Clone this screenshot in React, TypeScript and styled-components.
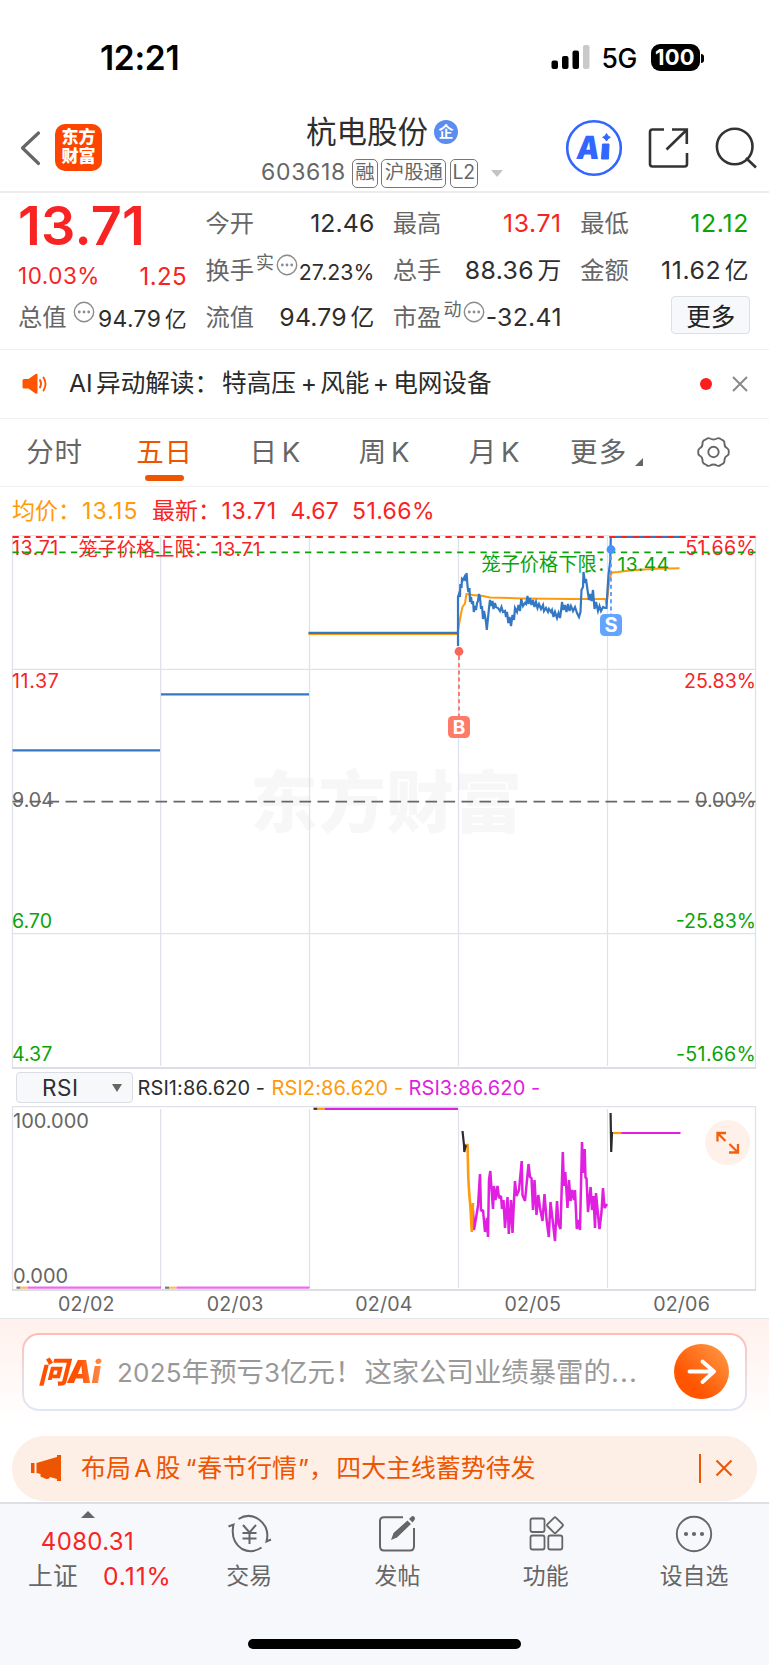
import React from 'react';
import styled, { createGlobalStyle } from 'styled-components';

const RED = '#f82424';
const GREEN = '#0aa30a';
const ORANGE = '#ff9a0a';
const BRAND = '#ee5500';
const INK = '#2e2e2e';
const GREY = '#666';
const GRID = '#dfe2ea';
const BLUE = '#3478c4';
const MAGENTA = '#e01fe0';
const FONT = `Inter, 'Noto Sans CJK SC', sans-serif`;

const GlobalStyle = createGlobalStyle`
  * { box-sizing: border-box; }
  html, body { margin: 0; padding: 0; background: #fff; }
  body { font-family: ${FONT}; color: ${INK}; width: 769px; }
`;

const Screen = styled.main`
  width: 769px;
  height: 1665px;
  display: flex;
  flex-direction: column;
  background: #fff;
  overflow: hidden;
  white-space: nowrap;
  line-height: 1.2;
`;

/* ---------- status bar ---------- */
const StatusBar = styled.div`
  height: 108px;
  padding: 8px 65px 0 100px;
  display: flex;
  align-items: center;
`;
const Clock = styled.span`
  font-size: 33.5px;
  font-weight: 600;
  color: #000;
  letter-spacing: -0.3px;
  flex: 1;
`;
const SignalBars = styled.svg`
  position: relative;
  top: -1px;
`;
const Network = styled.span`
  font-size: 26.5px;
  font-weight: 500;
  color: #000;
  width: 38px;
  margin-left: 11.5px;
  letter-spacing: -0.3px;
  position: relative;
  top: 0.5px;
`;
const Battery = styled.span`
  width: 49px;
  height: 27px;
  margin-left: 11px;
  border-radius: 9px;
  background: #000;
  color: #fff;
  font-size: 22px;
  font-weight: 700;
  letter-spacing: 0.2px;
  display: flex;
  align-items: center;
  justify-content: center;
  position: relative;
  top: -1px;
`;
const BatteryTip = styled.span`
  width: 3px;
  height: 9px;
  margin-left: 1.5px;
  border-radius: 0 4px 4px 0;
  background: #000;
`;

/* ---------- title bar ---------- */
const TitleBar = styled.header`
  height: 85px;
  display: flex;
  align-items: flex-start;
  border-bottom: 2px solid #ececec;
`;
const BackIcon = styled.svg`
  margin: 22px 0 0 19px;
`;
const Logo = styled.div`
  width: 47px;
  height: 47px;
  margin: 16px 0 0 14px;
  border-radius: 10px;
  background: #ff4400;
  color: #fff;
  font-size: 17px;
  font-weight: 900;
  line-height: 19.5px;
  text-align: center;
  padding-top: 3.5px;
`;
const Identity = styled.div`
  margin-left: 159px;
  width: 300px;
`;
const NameRow = styled.div`
  height: 38px;
  margin-top: 5px;
  padding-left: 45px;
  display: flex;
  align-items: center;
`;
const StockName = styled.span`
  font-size: 30.5px;
  width: 127px;
`;
const Badge = styled.span`
  width: 24px;
  height: 24px;
  border-radius: 50%;
  background: #5b8cf0;
  color: #fff;
  font-size: 15px;
  font-weight: 700;
  display: flex;
  align-items: center;
  justify-content: center;
  margin-left: 1px;
`;
const CodeRow = styled.div`
  display: flex;
  align-items: center;
  height: 29px;
  margin-top: 7.5px;
`;
const Code = styled.span`
  font-size: 23px;
  color: ${GREY};
  width: 91px;
  letter-spacing: 0.7px;
`;
const Tag = styled.span<{ $w: number }>`
  width: ${p => p.$w}px;
  height: 29px;
  margin-right: 3.4px;
  border: 1.4px solid #777;
  border-radius: 5px;
  color: ${GREY};
  font-size: 19.4px;
  display: flex;
  align-items: center;
  justify-content: center;
`;
const Caret = styled.span`
  border: 6.5px solid transparent;
  border-top: 7.5px solid #c4c4c4;
  border-bottom: 0;
  margin-left: 9.5px;
`;
const Actions = styled.svg`
  margin: 8px 0 0 4px;
  font-family: ${FONT};
`;

/* ---------- quote grid ---------- */
const Quote = styled.section`
  height: 157px;
  padding: 7px 20px 0 18px;
  display: grid;
  grid-template-columns: repeat(4, 169px);
  grid-template-rows: 47px 47px 47px;
  column-gap: 18.4px;
  border-bottom: 1.5px solid #efefef;
`;
const Cell = styled.div`
  display: flex;
  align-items: center;
`;
const BigPrice = styled.span`
  color: ${RED};
  font-size: 54px;
  font-weight: 600;
  letter-spacing: 0.2px;
  position: relative;
  top: 3px;
`;
const Label = styled.span`
  color: ${GREY};
  font-size: 24.3px;
`;
const Value = styled.span<{ $c?: string; $s?: number; $dy?: number; $ls?: number }>`
  color: ${p => p.$c || INK};
  font-size: ${p => p.$s || 24.8}px;
  letter-spacing: ${p => p.$ls ?? 0.4}px;
  margin-left: auto;
  position: relative;
  top: ${p => p.$dy || 0}px;
`;
const Unit = styled.span`
  font-size: 0.96em;
  margin-left: 3.5px;
`;
const Sup = styled.span`
  color: ${GREY};
  font-size: 18px;
  margin-left: 2px;
  position: relative;
  top: -8px;
`;
const Change = styled.span`
  color: ${RED};
  font-size: 22.5px;
  letter-spacing: 0.5px;
  position: relative;
  top: 5px;
`;
const InfoSvg = styled.svg<{ $ml: number }>`
  margin-left: ${p => p.$ml}px;
  position: relative;
  top: -5.5px;
  flex: none;
`;
const MoreButton = styled.button`
  width: 79px;
  height: 38px;
  margin: 0 -1px 0 auto;
  padding: 0;
  border: 1.5px solid #dcdfe6;
  border-radius: 4px;
  background: #f7f8fb;
  color: #222;
  font: 24.5px ${FONT};
  position: relative;
  top: -2.5px;
`;
const InfoIcon = ({ ml }: { ml: number }) => (
  <InfoSvg $ml={ml} width="22" height="22" viewBox="0 0 22 22">
    <circle cx="11" cy="11" r="9.7" fill="none" stroke="#8c8c8c" strokeWidth="1.4" />
    {[6.3, 11, 15.7].map(x => <circle key={x} cx={x} cy="11" r="1.4" fill="#8c8c8c" />)}
  </InfoSvg>
);

/* ---------- AI notice ---------- */
const Notice = styled.section`
  height: 68.5px;
  padding: 0 21.5px 0 21px;
  display: flex;
  align-items: center;
  border-bottom: 1.5px solid #f1f1f1;
`;
const NoticeText = styled.span`
  font-size: 24.6px;
  color: #2a2a2a;
  margin-left: 19px;
  flex: 1;
`;
const Gap = styled.span<{ $w: number }>`
  display: inline-block;
  width: ${p => p.$w}px;
`;
const Dot = styled.span`
  width: 12px;
  height: 12px;
  border-radius: 50%;
  background: #fa1e1e;
  margin-right: 20px;
`;

/* ---------- tabs ---------- */
const Tabs = styled.nav`
  height: 68.5px;
  display: flex;
  border-bottom: 1.5px solid #f0f0f0;
`;
const Tab = styled.div<{ $w: number; $active?: boolean }>`
  width: ${p => p.$w}px;
  padding-top: 17.5px;
  display: flex;
  flex-direction: column;
  align-items: center;
  font-size: 27.5px;
  line-height: 33px;
  letter-spacing: 0.7px;
  word-spacing: -4.5px;
  color: ${p => (p.$active ? BRAND : GREY)};
  &::after {
    content: '';
    width: 39px;
    height: 6px;
    margin-top: 6px;
    border-radius: 3px;
    background: ${p => (p.$active ? BRAND : 'transparent')};
  }
`;
const MoreTab = styled.div`
  display: flex;
  width: 118px;
  padding: 17.5px 0 0 19.5px;
  font-size: 27.5px;
  letter-spacing: 1.3px;
  line-height: 33px;
  color: ${GREY};
`;
const Corner = styled.span`
  margin: 22px 0 0 7px;
  height: 0;
  border-left: 8px solid transparent;
  border-bottom: 8px solid ${GREY};
`;

/* ---------- chart ---------- */
const Summary = styled.div`
  height: 48px;
  padding: 2.5px 0 0 12px;
  display: flex;
  align-items: center;
  font-size: 23px;
  color: ${RED};
`;
const SummaryItem = styled.span<{ $w: number; $c?: string; $ls?: number }>`
  width: ${p => p.$w}px;
  color: ${p => p.$c || RED};
  letter-spacing: ${p => p.$ls || 0}px;
`;
const ChartSvg = styled.svg`
  display: block;
  flex: none;
  font-family: ${FONT};
`;
const IndicatorRow = styled.div`
  height: 37px;
  padding-left: 16px;
  display: flex;
  align-items: center;
  font-size: 20px;
`;
const IndicatorSelect = styled.div`
  width: 117px;
  height: 31px;
  border: 1.5px solid #dadde4;
  border-radius: 4px;
  background: #f7f8fa;
  display: flex;
  align-items: center;
  padding: 0 10px 0 25px;
  justify-content: space-between;
  font-size: 22.5px;
  letter-spacing: 0.6px;
  margin-right: 4.5px;
`;
const SelectArrow = styled.span`
  border: 5px solid transparent;
  border-top: 8px solid ${GREY};
  border-bottom: 0;
`;
const Reading = styled.span<{ $c: string; $w: number; $ls?: number }>`
  color: ${p => p.$c};
  width: ${p => p.$w}px;
  letter-spacing: ${p => p.$ls ?? 0.1}px;
`;
const Dates = styled.div`
  height: 27px;
  padding: 1px 13px 0 12px;
  display: grid;
  grid-template-columns: repeat(5, 1fr);
  align-items: center;
  text-align: center;
  font-size: 19.6px;
  color: ${GREY};
  letter-spacing: 0.2px;
`;

/* ---------- ask AI ---------- */
const AskArea = styled.section`
  height: 184px;
  border-top: 1.5px solid #e4e6ec;
  background: linear-gradient(#fff1ec, #ffffff 106px);
  padding: 13.5px 12px 0;
`;
const AskFrame = styled.div`
  height: 78px;
  margin: 0 10px;
  border-radius: 17px;
  padding: 2px;
  background: linear-gradient(#ffbcb3, #f1d6de 50%, #dde8f6);
`;
const AskBox = styled.div`
  height: 100%;
  border-radius: 15px;
  background: #fff;
  display: flex;
  align-items: center;
  padding: 0 16px 0 14px;
`;
const AskBrand = styled.span`
  width: 79px;
  display: flex;
  align-items: center;
  font-size: 31px;
  font-weight: 900;
  font-style: italic;
  letter-spacing: -0.5px;
  background: linear-gradient(90deg, #ff5000 50%, #ff8a4a 80%);
  -webkit-background-clip: text;
  background-clip: text;
  color: transparent;
`;
const BrandHan = styled.span`
  font-size: 30px;
`;
const Prompt = styled.span`
  color: #999;
  font-size: 27.4px;
  flex: 1;
  position: relative;
  top: 1px;
`;
const PromptDigits = styled.span`
  font-size: 26px;
  letter-spacing: 0.2px;
`;
const Ellipsis = styled.span`
  letter-spacing: 1.1px;
`;
const SendButton = styled.svg`
  flex: none;
`;
const Banner = styled.div`
  height: 65px;
  margin-top: 25px;
  border-radius: 33px;
  background: #fdeee6;
  color: ${BRAND};
  display: flex;
  align-items: center;
  padding: 0 24.5px 0 18px;
  font-size: 24.9px;
`;
const BannerText = styled.span`
  flex: 1;
  margin-left: 19px;
  padding-top: 2px;
`;
const Divider = styled.span`
  width: 1.5px;
  height: 29px;
  background: ${BRAND};
  margin-right: 14px;
`;

/* ---------- bottom bar ---------- */
const BottomBar = styled.footer`
  flex: 1;
  border-top: 2px solid #dddfe4;
  background: #f7f8fb;
  display: flex;
  flex-direction: column;
  align-items: center;
`;
const NavRow = styled.div`
  height: 135px;
  width: 100%;
  display: flex;
`;
const IndexPanel = styled.div`
  width: 175px;
  display: flex;
  flex-direction: column;
  align-items: center;
  padding-top: 7px;
  color: ${RED};
`;
const UpMark = styled.span`
  border: 7px solid transparent;
  border-bottom: 7px solid ${GREY};
  border-top: 0;
`;
const IndexValue = styled.span`
  font-size: 24px;
  line-height: 30px;
  margin-top: 9px;
  letter-spacing: 0.35px;
`;
const IndexLine = styled.div`
  display: flex;
  width: 100%;
  padding-left: 28px;
  font-size: 24.7px;
  line-height: 30px;
  letter-spacing: 0.9px;
  margin-top: 3.5px;
`;
const IndexName = styled.span`
  color: ${GREY};
  letter-spacing: 0.3px;
  width: 75px;
`;
const NavItem = styled.div`
  width: 148.3px;
  display: flex;
  flex-direction: column;
  align-items: center;
  padding-top: 7px;
  font-size: 22.9px;
  line-height: 30px;
  color: ${GREY};
  svg { display: block; margin-bottom: 5.5px; }
`;
const HomeIndicator = styled.div`
  width: 273px;
  height: 10px;
  border-radius: 5px;
  background: #000;
`;

/* ---------- chart data ---------- */
const days = [160.7, 309.5, 458.5, 607.5];

const pricePath = [
  [458, 646], [458, 597], [459, 594], [460, 597], [460.3, 584], [461.5, 588], [462, 579], [463, 580], [464.5, 577],
  [465.5, 581], [466.6, 573], [467.5, 586], [468.3, 592], [469.5, 588], [470, 602], [471, 597], [472, 604],
  [473, 601], [473.8, 612], [475, 606], [476, 610], [477, 603], [478, 601], [479, 594], [480, 597], [481, 609],
  [482, 606], [483, 619], [484, 611], [485, 616], [486, 622], [486.8, 630], [488, 618], [489, 608], [490, 600],
  [491, 606], [492.5, 601], [493.5, 609], [495, 603], [496, 607], [498, 608], [500, 611], [501.5, 607], [503, 612],
  [505, 611], [506, 617], [507, 612], [508.3, 623], [509.5, 617], [511, 626], [512.5, 615], [514, 620], [515, 608],
  [517, 612], [518.5, 605], [520, 611], [521.2, 599], [523, 606], [525, 603], [526, 604], [527.5, 596], [528.5, 604],
  [530, 598], [531.5, 605], [533, 600], [534.5, 607], [536, 602], [537.5, 608], [539, 604], [541, 609], [543, 605],
  [544, 611], [546, 608], [548, 612], [549, 609], [551, 612], [552, 610], [553.5, 617], [555, 612], [557, 618],
  [558.5, 613], [560, 618], [561, 611], [562, 602], [563.5, 610], [565, 605], [566.5, 612], [568, 604], [569.5, 611],
  [571, 606], [573, 611], [575, 607], [577, 613], [579, 617], [580.5, 612], [581.5, 590], [583, 587], [583.5, 572],
  [585, 583], [586, 579], [587.5, 590], [589, 600], [590, 594], [591.5, 601], [593, 590], [594.5, 609], [596, 602],
  [598, 611], [599.5, 606], [601, 611], [603, 607], [605, 608], [606.5, 608], [607.5, 590], [608.5, 575],
  [609.5, 567], [610.2, 562], [610.8, 537],
];
const averagePath = [
  [308.5, 633.9], [457.5, 633.9], [459, 625], [460.7, 615], [462.5, 607], [465, 603.5], [466.4, 594], [473, 595], [483, 596],
  [490, 597.4], [523, 598.4], [573, 599], [605.5, 599], [606.5, 604], [608, 593], [609, 583], [611, 574], [612.3, 572.5],
  [618, 572], [626, 571], [640, 569.7], [656, 568.7], [679.5, 568.3],
];
const rsiMain = [
  [473, 1210], [474, 1230], [476, 1218], [478, 1206], [480, 1174], [481, 1211], [483, 1210], [485, 1232], [487, 1218],
  [488, 1237], [489, 1180], [490.3, 1171], [491.5, 1189], [493, 1209], [494, 1186], [495.5, 1200], [497.5, 1186],
  [499, 1198], [501, 1196], [502, 1209], [503.5, 1200], [505, 1228], [507.5, 1197], [508.8, 1234], [511, 1200],
  [512.5, 1233], [514, 1200], [515, 1181], [516.5, 1196], [519, 1190], [521.7, 1161], [522.5, 1195], [525, 1201],
  [527, 1180], [528.5, 1164], [530, 1177], [531.5, 1178], [533, 1210], [534.5, 1180], [536.5, 1215], [538.3, 1195],
  [540, 1208], [542.5, 1221], [544.5, 1194], [546.5, 1219], [548.8, 1237], [550.5, 1202], [552.5, 1219], [555, 1241],
  [557, 1201], [558.5, 1224], [560.5, 1229], [562.8, 1152], [564, 1186], [565.3, 1172], [567.5, 1208], [569, 1180],
  [570.5, 1201], [572, 1190], [574, 1200], [575, 1190], [576.8, 1229], [578, 1220], [580, 1230], [582, 1142],
  [583, 1173], [584.7, 1149], [585.5, 1178], [586.5, 1178], [588, 1212], [590.6, 1187], [592, 1210], [593.5, 1196],
  [595, 1228], [596, 1193], [598.5, 1220], [599.5, 1229], [601.5, 1212], [603, 1188], [604.5, 1208], [607, 1204],
];
const toPoints = (pts: number[][]) => pts.map(p => p.join(',')).join(' ');

const priceLabels = [
  { y: 554.5, price: '13.71', pct: '51.66%', color: RED, ls: 0.55 },
  { y: 687.5, price: '11.37', pct: '25.83%', color: RED, ls: 0.65 },
  { y: 807.3, price: '9.04', pct: '0.00%', color: GREY, ls: 0 },
  { y: 927.8, price: '6.70', pct: '-25.83%', color: GREEN, ls: 0 },
  { y: 1060.8, price: '4.37', pct: '-51.66%', color: GREEN, ls: 0 },
];

function PriceChart() {
  return (
    <ChartSvg width="769" height="534" viewBox="0 535 769 534">
      <text x="386" y="827" fontSize="67.5" fontWeight="900" fill="#f7f7f7" textAnchor="middle" textLength="272">东方财富</text>
      <g stroke={GRID} strokeWidth="1.3" fill="none">
        <path d="M12.5 1068V535.6H755.5V1068" />
        {days.map(x => <line key={x} x1={x} x2={x} y1="537" y2="1066" />)}
        <line x1="12.5" x2="755.5" y1="669.4" y2="669.4" />
        <line x1="12.5" x2="755.5" y1="933.6" y2="933.6" />
        <line x1="12" x2="756" y1="1068" y2="1068" stroke="#cfd3dc" />
      </g>
      {priceLabels.map(l => (
        <g key={l.y} fill={l.color} fontSize="19.6">
          <text x="12" y={l.y} letterSpacing={l.ls}>{l.price}</text>
          <text x="756" y={l.y} textAnchor="end" letterSpacing={l.pct.includes('51') ? 0.35 : 0}>{l.pct}</text>
        </g>
      ))}
      <line x1="12.5" x2="755.5" y1="801.7" y2="801.7" stroke={GREY} strokeWidth="1.8" strokeDasharray="11.6 6.4" strokeDashoffset="1" />
      <polyline points={toPoints(averagePath)} fill="none" stroke={ORANGE} strokeWidth="2" strokeLinejoin="round" />
      <g stroke={BLUE} strokeWidth="2.2" fill="none">
        <line x1="12.5" x2="160" y1="750.3" y2="750.3" />
        <line x1="161" x2="309" y1="694.4" y2="694.4" />
        <line x1="308.5" x2="457.5" y1="632.9" y2="632.9" />
        <polyline points={toPoints(pricePath)} />
        <line x1="610.5" x2="680" y1="537" y2="537" />
      </g>
      <line x1="12.5" x2="755.5" y1="537" y2="537" stroke={RED} strokeWidth="2" strokeDasharray="6.3 5.4" />
      <line x1="12.5" x2="755.5" y1="552.4" y2="552.4" stroke={GREEN} strokeWidth="1.9" strokeDasharray="6.3 5.4" />
      <g fontSize="19.2">
        <text x="78.5" y="556.3" fill={RED}>笼子价格上限：</text>
        <text x="215" y="556.3" fill={RED} letterSpacing="0.6">13.71</text>
        <text x="481.5" y="571.3" fill={GREEN}>笼子价格下限：</text>
        <text x="617.5" y="571.3" fill={GREEN} letterSpacing="0.5">13.44</text>
      </g>
      <line x1="459" x2="459" y1="656" y2="716" stroke="#ff7866" strokeWidth="1.9" strokeDasharray="4 3.2" />
      <circle cx="459" cy="651.5" r="4.4" fill="#f8675a" />
      <rect x="448" y="716" width="22" height="22" rx="4.5" fill="#ff7b69" />
      <text x="459" y="733.7" fontSize="19" fontWeight="700" fill="#fff" textAnchor="middle">B</text>
      <line x1="611" x2="611" y1="556" y2="614" stroke="#5c9eff" strokeWidth="1.9" strokeDasharray="4 3.2" />
      <circle cx="611" cy="549.5" r="4.4" fill="#4792ff" />
      <rect x="600" y="614" width="22" height="22" rx="4.5" fill="#63a4ff" />
      <text x="611" y="632" fontSize="20" fontWeight="700" fill="#fff" textAnchor="middle">S</text>
    </ChartSvg>
  );
}

function FlatRsi({ y, from, to, soft }: { y: number; from: number; to: number; soft?: boolean }) {
  return (
    <g strokeWidth="2.2" opacity={soft ? 0.65 : 1}>
      <line x1={from} x2={from + 4} y1={y} y2={y} stroke="#333" />
      <line x1={from + 4} x2={from + 11.5} y1={y} y2={y} stroke={ORANGE} />
      <line x1={from + 11.5} x2={to} y1={y} y2={y} stroke={MAGENTA} />
    </g>
  );
}

function RsiChart() {
  return (
    <ChartSvg width="769" height="185" viewBox="0 1106 769 185">
      <g stroke={GRID} strokeWidth="1.3" fill="none">
        <path d="M12.5 1290V1106.6H755.5V1290" />
        {days.map(x => <line key={x} x1={x} x2={x} y1="1109" y2="1288" />)}
        <line x1="12" x2="756" y1="1290" y2="1290" stroke="#cfd3dc" />
      </g>
      <g fontSize="20" fill={GREY}>
        <text x="13" y="1128.3">100.000</text>
        <text x="13" y="1282.5">0.000</text>
      </g>
      <FlatRsi y={1287.7} from={16.5} to={161} soft />
      <FlatRsi y={1287.7} from={165} to={309.5} soft />
      <FlatRsi y={1108.8} from={313.5} to={458} />
      <polyline points={toPoints(rsiMain)} fill="none" stroke={MAGENTA} strokeWidth="2.5" strokeLinejoin="bevel" />
      <polyline points="466,1148 467.5,1144 468.3,1178 469.3,1195 470.3,1205 471.8,1232 472.5,1212 473,1203" fill="none" stroke={ORANGE} strokeWidth="2.6" />
      <polyline points="462.5,1131 464,1145 464.3,1152 465.5,1146 466.5,1147" fill="none" stroke="#2b2b2b" strokeWidth="2.2" />
      <polyline points="610.6,1113 611.2,1152 612,1133 613.5,1133" fill="none" stroke="#2b2b2b" strokeWidth="2.2" />
      <line x1="613" x2="622" y1="1133" y2="1133" stroke={ORANGE} strokeWidth="2.2" />
      <line x1="621.5" x2="680.5" y1="1133" y2="1133" stroke={MAGENTA} strokeWidth="2.2" />
      <circle cx="727.7" cy="1142.6" r="22.5" fill="#fff0e9" />
      <path d="M717.500 1141.500V1133H726M717.500 1133L725.500 1141M738 1144V1152.500H729M738 1152.500L729.500 1144" fill="none" stroke="#f2600f" strokeWidth="2.300" />
    </ChartSvg>
  );
}

export default function App() {
  return (
    <Screen>
      <GlobalStyle />
      <StatusBar>
        <Clock>12:21</Clock>
        <SignalBars width="39" height="26" viewBox="0 0 39 26">
          <rect x="0.5" y="16.500" width="6.500" height="8.500" rx="2" />
          <rect x="11" y="12" width="6.500" height="13" rx="2" />
          <rect x="21.500" y="6.500" width="6.500" height="18.500" rx="2" />
          <rect x="32" y="1" width="6.500" height="24" rx="2" fill="#c9c9c9" />
        </SignalBars>
        <Network>5G</Network>
        <Battery>100</Battery>
        <BatteryTip />
      </StatusBar>

      <TitleBar>
        <BackIcon width="22" height="36" viewBox="0 0 22 36">
          <path d="M19.500 3L3.500 18L19.500 33.500" fill="none" stroke="#666" strokeWidth="3.200" strokeLinecap="round" strokeLinejoin="round" />
        </BackIcon>
        <Logo>东方<br />财富</Logo>
        <Identity>
          <NameRow>
            <StockName>杭电股份</StockName>
            <Badge>企</Badge>
          </NameRow>
          <CodeRow>
            <Code>603618</Code>
            <Tag $w={26}>融</Tag>
            <Tag $w={65}>沪股通</Tag>
            <Tag $w={28}>L2</Tag>
            <Caret />
          </CodeRow>
        </Identity>
        <Actions width="204" height="66" viewBox="565 116 204 66">
          <circle cx="594" cy="148" r="26.800" fill="none" stroke="#3366ff" strokeWidth="2.600" />
          <text transform="translate(575.500 158.800) skewX(-7)" fontSize="32" fontWeight="900" fill="#3366ff" textLength="23" lengthAdjust="spacingAndGlyphs">A</text>
          <path d="M602.500 144h6.500l-0.500 15h-7z" fill="#3366ff" stroke="#3366ff" strokeLinejoin="round" />
          <path d="M606.500 133.500q1 3 3.800 3.800q-2.800 1-3.800 3.800q-1-2.800-3.800-3.800q2.800-0.800 3.800-3.800z" fill="#3366ff" stroke="#3366ff" />
          <g fill="none" stroke="#333" strokeWidth="2.600">
            <path d="M664 129.500H652.500Q650 129.500 650 132V164Q650 166.500 652.500 166.500H684.500Q687 166.500 687 164V153" />
            <path d="M672 129.500H686.800V144M686.500 130L666.500 149.500" />
            <circle cx="734.700" cy="146.500" r="17.800" />
            <path d="M746 158L756 167.500" />
          </g>
        </Actions>
      </TitleBar>

      <Quote>
        <Cell><BigPrice>13.71</BigPrice></Cell>
        <Cell><Label>今开</Label><Value $ls={0.1}>12.46</Value></Cell>
        <Cell><Label>最高</Label><Value $c={RED} $ls={0.6}>13.71</Value></Cell>
        <Cell><Label>最低</Label><Value $c={GREEN} $ls={0.7}>12.12</Value></Cell>

        <Cell><Change>10.03%</Change><Value $c={RED} $s={24} $dy={7}>1.25</Value></Cell>
        <Cell><Label>换手</Label><Sup>实</Sup><InfoIcon ml={2} /><Value $s={21.3} $dy={2.5} $ls={0}>27.23%</Value></Cell>
        <Cell><Label>总手</Label><Value>88.36<Unit>万</Unit></Value></Cell>
        <Cell><Label>金额</Label><Value $ls={0.6}>11.62<Unit>亿</Unit></Value></Cell>

        <Cell><Label>总值</Label><InfoIcon ml={6} /><Value $s={22.8} $dy={1}>94.79<Unit>亿</Unit></Value></Cell>
        <Cell><Label>流值</Label><Value $ls={0.2}>94.79<Unit>亿</Unit></Value></Cell>
        <Cell><Label>市盈</Label><Sup>动</Sup><InfoIcon ml={2} /><Value $ls={0.3}>-32.41</Value></Cell>
        <Cell><MoreButton>更多</MoreButton></Cell>
      </Quote>

      <Notice>
        <svg width="29" height="24" viewBox="0 0 29 24">
          <path d="M1.500 8.500Q1.500 7 3 7H7.500L14.500 2Q16.500 1 16.500 3V20.500Q16.500 22.500 14.500 21.500L7.500 16.500H3Q1.500 16.500 1.500 15Z" fill="#ff5500" />
          <path d="M19 8Q21 11.800 19 15.500M22.500 5.500Q26.500 11.800 22.500 18.500" fill="none" stroke="#ff5500" strokeWidth="1.900" strokeLinecap="round" />
        </svg>
        <NoticeText>AI<Gap $w={3.5} />异动解读：<Gap $w={3} />特高压<Gap $w={5} />+<Gap $w={3} />风能<Gap $w={3.5} />+<Gap $w={4} />电网设备</NoticeText>
        <Dot />
        <svg width="16" height="16" viewBox="0 0 16 16"><path d="M1 1L15 15M15 1L1 15" stroke="#888" strokeWidth="1.900" /></svg>
      </Notice>

      <Tabs>
        <Tab $w={109}>分时</Tab>
        <Tab $w={111} $active>五日</Tab>
        <Tab $w={110.500}>日 K</Tab>
        <Tab $w={108}>周 K</Tab>
        <Tab $w={112}>月 K</Tab>
        <MoreTab>更多<Corner /></MoreTab>
        <svg width="90" height="66" viewBox="668.500 418.500 90 66">
          <g fill="none" stroke="#666" strokeWidth="1.900" strokeLinejoin="round">
            <circle cx="713" cy="451.500" r="5.200" />
            <path d="M706 438.500Q707.500 437 709.500 438Q713 440 716.500 438Q718.500 437 720 438.500L723 440.200Q724.200 441.500 724 443.500Q724 446.500 727 448Q728.500 449 728.300 451.500Q728.500 454 727 455Q724 456.500 724 459.500Q724.200 461.500 723 462.800L720 464.500Q718.500 466 716.500 465Q713 463 709.500 465Q707.500 466 706 464.500L703 462.800Q701.800 461.500 702 459.500Q702 456.500 699 455Q697.500 454 697.700 451.500Q697.500 449 699 448Q702 446.500 702 443.500Q701.800 441.500 703 440.200Z" />
          </g>
        </svg>
      </Tabs>

      <Summary>
        <SummaryItem $w={70} $c={ORANGE}>均价：</SummaryItem>
        <SummaryItem $w={70} $c={ORANGE} $ls={1.1}>13.15</SummaryItem>
        <SummaryItem $w={69.500}>最新：</SummaryItem>
        <SummaryItem $w={69} $ls={0.7}>13.71</SummaryItem>
        <SummaryItem $w={61.500} $ls={0.3}>4.67</SummaryItem>
        <SummaryItem $w={90} $ls={0.4}>51.66%</SummaryItem>
      </Summary>
      <PriceChart />
      <IndicatorRow>
        <IndicatorSelect>RSI<SelectArrow /></IndicatorSelect>
        <Reading $c={INK} $w={134}>RSI1:86.620 -</Reading>
        <Reading $c={ORANGE} $w={137}>RSI2:86.620 -</Reading>
        <Reading $c={MAGENTA} $w={137}>RSI3:86.620 -</Reading>
      </IndicatorRow>
      <RsiChart />
      <Dates>
        {['02/02', '02/03', '02/04', '02/05', '02/06'].map(d => <span key={d}>{d}</span>)}
      </Dates>

      <AskArea>
        <AskFrame>
          <AskBox>
            <AskBrand><BrandHan>问</BrandHan>Ai</AskBrand>
            <Prompt><PromptDigits>2025</PromptDigits>年预亏<PromptDigits>3</PromptDigits>亿元！<Gap $w={2} />这家公司业绩暴雷的<Ellipsis>...</Ellipsis></Prompt>
            <SendButton width="55" height="55" viewBox="0 0 55 55">
              <defs>
                <linearGradient id="send" x1="0.300" y1="0.700" x2="0.900" y2="0.100">
                  <stop offset="0" stopColor="#ff5500" />
                  <stop offset="1" stopColor="#ff9440" />
                </linearGradient>
              </defs>
              <circle cx="27.500" cy="27.500" r="27.500" fill="url(#send)" />
              <path d="M15.500 27.500H40M28.500 17.500L40 27.500L28.500 38" fill="none" stroke="#fff" strokeWidth="3.800" strokeLinecap="round" strokeLinejoin="round" />
            </SendButton>
          </AskBox>
        </AskFrame>
        <Banner>
          <svg width="32" height="28" viewBox="0 0 32 28">
            <path d="M1 9H4.500V19H1ZM6.500 9L27 3V1H31V27H27V25L20 23Q19 26 15 24.500L10.500 22.500V20L6.500 19Z" fill={BRAND} />
          </svg>
          <BannerText>布局<Gap $w={3.5} />A<Gap $w={4} />股<Gap $w={5} />“<Gap $w={1} />春节行情<Gap $w={1} />”，<Gap $w={2.5} />四大主线蓄势待发</BannerText>
          <Divider />
          <svg width="18" height="18" viewBox="0 0 18 18"><path d="M1.500 1.500L16.500 16.500M16.500 1.500L1.500 16.500" stroke={BRAND} strokeWidth="2" /></svg>
        </Banner>
      </AskArea>

      <BottomBar>
        <NavRow>
          <IndexPanel>
            <UpMark />
            <IndexValue>4080.31</IndexValue>
            <IndexLine><IndexName>上证</IndexName>0.11%</IndexLine>
          </IndexPanel>
          <NavItem>
            <svg width="46" height="44" viewBox="226 1511 46 44">
              <g fill="none" stroke="#666" strokeWidth="2">
                <path d="M238.500 1519Q249 1512.500 259 1519.500Q270 1528 266.500 1541.500L271 1539.500M261.500 1547.500Q252 1554 242 1549Q230 1541 233.500 1524.500L228.500 1526.500" />
                <path d="M243 1525L249.500 1532.500L256 1525M242.500 1533H256.500M242.500 1538.500H256.500M249.500 1532.500V1544" />
              </g>
            </svg>
            交易
          </NavItem>
          <NavItem>
            <svg width="46" height="44" viewBox="375 1511 46 44">
              <path d="M404 1517.300H385Q381 1517.300 381 1521V1546Q381 1550.500 385 1550.500H411Q415 1550.500 415 1546V1528" fill="none" stroke="#666" strokeWidth="2" />
              <path d="M392 1540L394.500 1533L408.500 1520.500L412 1524L398 1537.500ZM410 1519L412.500 1516.500Q414 1515.500 415.500 1517Q416.500 1518.500 415.500 1520L413.500 1522.500Z" fill="#666" />
            </svg>
            发帖
          </NavItem>
          <NavItem>
            <svg width="46" height="44" viewBox="523 1511 46 44">
              <g fill="none" stroke="#666" strokeWidth="1.800">
                <rect x="530.500" y="1518.500" width="14" height="13.500" rx="2" />
                <rect x="530.500" y="1535.500" width="14" height="14" rx="2" />
                <rect x="548.300" y="1535.500" width="14" height="14" rx="2" />
                <rect x="549" y="1519.200" width="12" height="12" rx="1.500" transform="rotate(45 555 1525.200)" />
              </g>
            </svg>
            功能
          </NavItem>
          <NavItem>
            <svg width="46" height="44" viewBox="671 1511 46 44">
              <circle cx="694" cy="1534" r="17.200" fill="none" stroke="#666" strokeWidth="1.900" />
              {[686, 694, 702].map(x => <circle key={x} cx={x} cy="1534" r="2.100" fill="#666" />)}
            </svg>
            设自选
          </NavItem>
        </NavRow>
        <HomeIndicator />
      </BottomBar>
    </Screen>
  );
}
